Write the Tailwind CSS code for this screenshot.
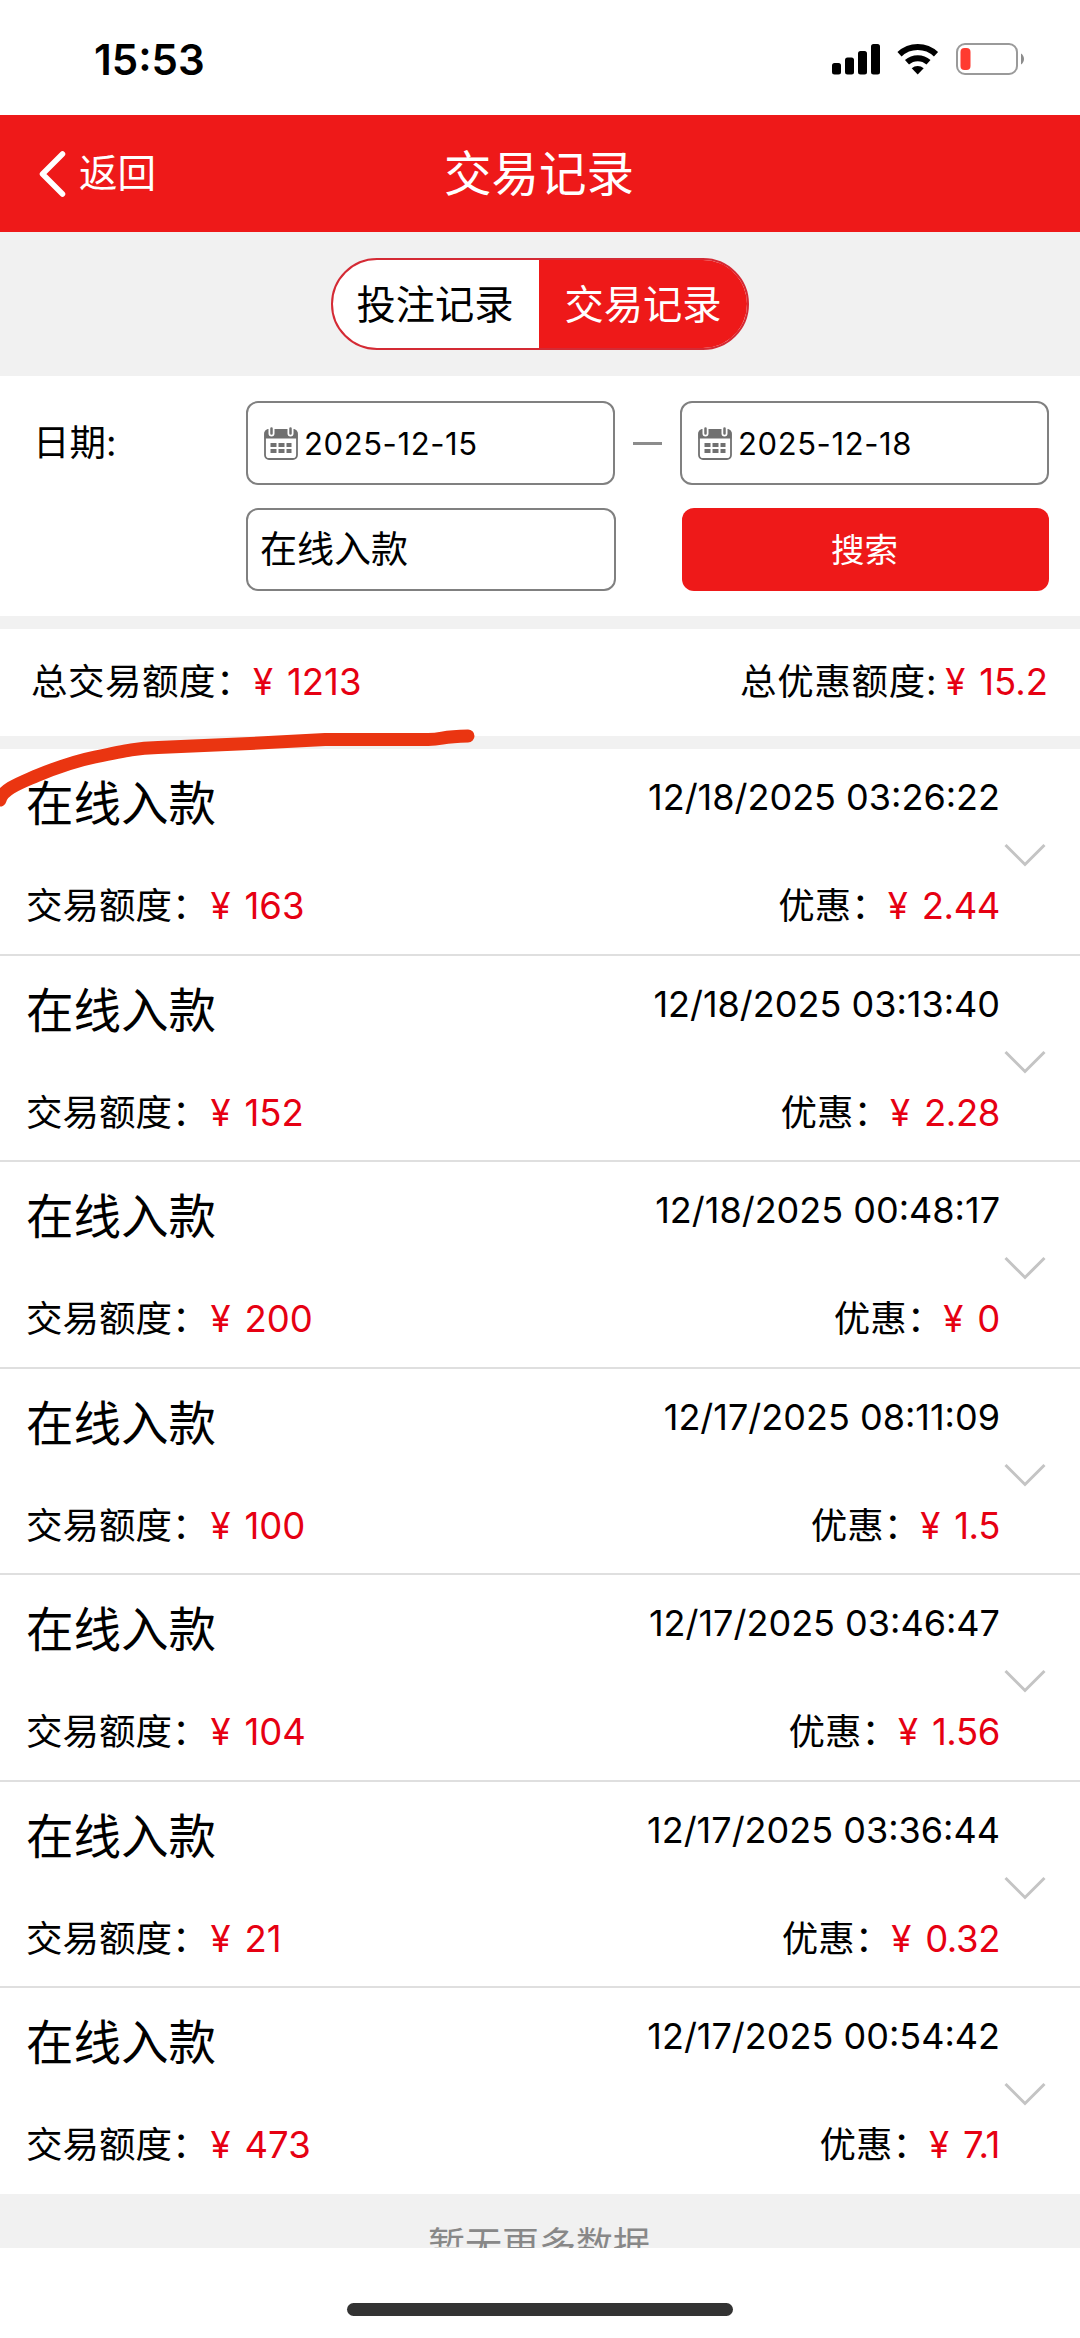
<!DOCTYPE html>
<html lang="zh-CN">
  <head>
    <meta charset="UTF-8" />
    <meta name="viewport" content="width=device-width, initial-scale=1.0" />
    <title>交易记录</title>
    <script src="https://cdn.jsdelivr.net/npm/@tailwindcss/browser@4"></script>
  </head>

  <body class="bg-white">
    <div class="relative flex flex-col w-[1080px] h-[2338px] overflow-hidden bg-white text-black font-['Inter','Noto_Sans_CJK_SC',sans-serif] whitespace-nowrap">
      <!-- status bar -->
      <div class="flex shrink-0 justify-between h-[115px] pt-[43px] pl-[94px] pr-[55px]">
        <div class="text-[42px] leading-[34px] font-semibold">15:53</div>
        <svg class="w-[194px] h-[32px] shrink-0" viewBox="831 43 194 32">
          <rect x="832" y="63" width="9" height="11.500" rx="2.500" />
          <rect x="845" y="57.500" width="9" height="17" rx="2.500" />
          <rect x="858" y="51" width="9" height="23.500" rx="2.500" />
          <rect x="871" y="44" width="9" height="30.500" rx="2.500" />
          <g fill="none" stroke="#000" stroke-width="6">
            <path d="M899.500 54.200a26.500 26.500 0 0 1 36.500 0" />
            <path d="M907 62.300a16 16 0 0 1 21.500 0" />
          </g>
          <path d="M911.700 68.200a9 9 0 0 1 12 0l-6 6.300z" />
          <rect x="957" y="44" width="60" height="30" rx="8" fill="none" stroke="#9a9a9a" stroke-width="2" />
          <rect x="960.500" y="48" width="10" height="22" rx="4" fill="#ff3b30" />
          <path d="M1021 53.500c4 2.500 4 8.500 0 11z" fill="#8c8c8c" />
        </svg>
      </div>

      <!-- header -->
      <header class="relative flex shrink-0 items-center justify-center h-[117px] bg-[#ee1919] text-white">
        <a class="absolute left-[38px] top-0 h-full flex items-center">
          <svg class="w-[28px] h-[48px] mr-[13px]" viewBox="0 0 28 48" fill="none" stroke="#fff" stroke-width="5.500" stroke-linecap="round" stroke-linejoin="round">
            <path d="M24.500 4L4.500 24l20 20" />
          </svg>
          <span class="text-[38.5px] leading-none">返回</span>
        </a>
        <h1 class="pr-[2px] text-[47.5px] leading-none">交易记录</h1>
      </header>

      <!-- tabs -->
      <div class="flex shrink-0 justify-center h-[144px] pt-[26px] bg-[#f1f1f1]">
        <div class="flex w-[418px] h-[92px] rounded-full overflow-hidden border-2 border-[#d42a34] bg-white text-[39.3px] leading-none">
          <div class="flex items-center justify-center w-[206px] pr-[2px] pt-[2px]">投注记录</div>
          <div class="flex items-center justify-center flex-1 pt-[2px] bg-[#ee1919] text-white">交易记录</div>
        </div>
      </div>

      <!-- filter -->
      <div class="flex shrink-0 h-[240px] pt-[25px] pl-[33px] pr-[31px]">
        <div class="w-[213px] h-[84px] flex items-center text-[36.5px] leading-none">日期:</div>
        <div class="flex-1">
          <div class="flex items-center justify-between h-[84px]">
            <div class="flex items-center w-[369px] h-[84px] pl-[16px] border-2 border-[#808080] rounded-[12px]">
              <svg class="w-[34px] h-[34px] mr-[6px]" viewBox="0 0 34 34"><use href="#calendar" /></svg>
              <span class="text-[31px] leading-none tracking-[0.6px]">2025-12-15</span>
            </div>
            <div class="w-[29px] h-[3px] bg-[#8c8c8c]"></div>
            <div class="flex items-center w-[369px] h-[84px] pl-[16px] border-2 border-[#808080] rounded-[12px]">
              <svg class="w-[34px] h-[34px] mr-[6px]" viewBox="0 0 34 34"><use href="#calendar" /></svg>
              <span class="text-[31px] leading-none tracking-[0.6px]">2025-12-18</span>
            </div>
          </div>
          <div class="flex justify-between mt-[23px] h-[83px]">
            <div class="flex items-center w-[370px] pl-[12px] border-2 border-[#808080] rounded-[12px] text-[37px] leading-none">在线入款</div>
            <button class="w-[367px] pr-[2px] pt-[2px] rounded-[12px] bg-[#ee1919] text-white text-[33.5px] leading-none">搜索</button>
          </div>
        </div>
      </div>

      <!-- totals -->
      <div class="flex shrink-0 items-center justify-between h-[133px] pl-[31px] pr-[32px] border-y-[13px] border-[#f1f1f1] text-[36.5px] leading-none">
        <div class="flex items-center">
          <span class="tracking-[0.5px]">总交易额度&#65306;</span><span class="inline-block w-[34px] text-[#e60012]">¥</span><span class="text-[#e60012]">1213</span>
        </div>
        <div class="flex items-center">
          <span class="pr-[8px] tracking-[0.7px]">总优惠额度:</span><span class="inline-block w-[34px] text-[#e60012]">¥</span><span class="text-[#e60012]">15.2</span>
        </div>
      </div>

      <!-- records -->
      <div id="records" class="shrink-0 h-[1445px]"></div>

      <!-- end of list -->
      <div class="shrink-0 h-[54px] overflow-hidden pt-[32px] pr-[2px] bg-[#f1f1f1] text-center text-[37px] leading-[40px] text-[#888]">暂无更多数据</div>

      <div class="mt-[55px] mx-auto w-[386px] h-[13px] shrink-0 rounded-full bg-[#333]"></div>

      <!-- pen mark -->
      <svg class="absolute left-0 top-[720px] w-[500px] h-[100px]" viewBox="0 720 500 100" fill="none" stroke="#ea3511" stroke-width="13" stroke-linecap="round" stroke-linejoin="round">
        <path d="M0 800C3 789 20 783 36 776C58 767 75 761 95 757C128 750 138 748 158 747.500L250 743.500L325 739.500H428C445 739 440 736.500 468 736" />
      </svg>
    </div>

    <svg class="hidden">
      <symbol id="calendar" viewBox="0 0 34 34">
        <rect x="1" y="4" width="32" height="29" rx="4" fill="#fff" stroke="#707070" stroke-width="1.800" />
        <path d="M0.500 12.500V7.500a4 4 0 0 1 4-4h25a4 4 0 0 1 4 4v5z" fill="#707070" />
        <path d="M7.500 3.500v4M26.500 3.500v4" stroke="#fff" stroke-width="6" stroke-linecap="round" />
        <path d="M7.500 2.500v5M26.500 2.500v5" stroke="#707070" stroke-width="2.500" stroke-linecap="round" />
        <path d="M6.500 17h6v4h-6zM14.500 17h6v4h-6zM22.500 17h5v4h-5zM6.500 23h6v4h-6zM14.500 23h6v4h-6zM22.500 23h5v4h-5z" fill="#707070" />
      </symbol>
    </svg>

    <script>
      const records = [
        { time: "12/18/2025 03:26:22", amount: "163", bonus: "2.44" },
        { time: "12/18/2025 03:13:40", amount: "152", bonus: "2.28" },
        { time: "12/18/2025 00:48:17", amount: "200", bonus: "0" },
        { time: "12/17/2025 08:11:09", amount: "100", bonus: "1.5" },
        { time: "12/17/2025 03:46:47", amount: "104", bonus: "1.56" },
        { time: "12/17/2025 03:36:44", amount: "21", bonus: "0.32" },
        { time: "12/17/2025 00:54:42", amount: "473", bonus: "7.1" },
      ];
      document.getElementById("records").innerHTML = records
        .map(
          ({ time, amount, bonus }) => `
          <div class="flex h-[206.5px] pl-[26px] border-b-2 border-[#dfdfdf] last:border-0">
            <div class="w-[974px]">
              <div class="flex justify-between pt-[29px]">
                <span class="text-[47.5px] leading-[52px]">在线入款</span>
                <span class="text-[36px] leading-[38px]">${time}</span>
              </div>
              <div class="flex justify-between mt-[57px] text-[36.5px] leading-[38px]">
                <div class="flex">
                  <span>交易额度&#65306;</span><span class="inline-block w-[34px] ml-[2px] text-[#e60012]">¥</span><span class="text-[#e60012]">${amount}</span>
                </div>
                <div class="flex">
                  <span>优惠&#65306;</span><span class="inline-block w-[34px] text-[#e60012]">¥</span><span class="tracking-[-0.4px] text-[#e60012]">${bonus}</span>
                </div>
              </div>
            </div>
            <svg class="w-[44px] h-[24px] mt-[94px] ml-[3px]" viewBox="0 0 44 24" fill="none" stroke="#c4c4c4" stroke-width="3">
              <path d="M2.500 2l19.500 19.500L41.500 2" />
            </svg>
          </div>`
        )
        .join("");
    </script>
  </body>
</html>
